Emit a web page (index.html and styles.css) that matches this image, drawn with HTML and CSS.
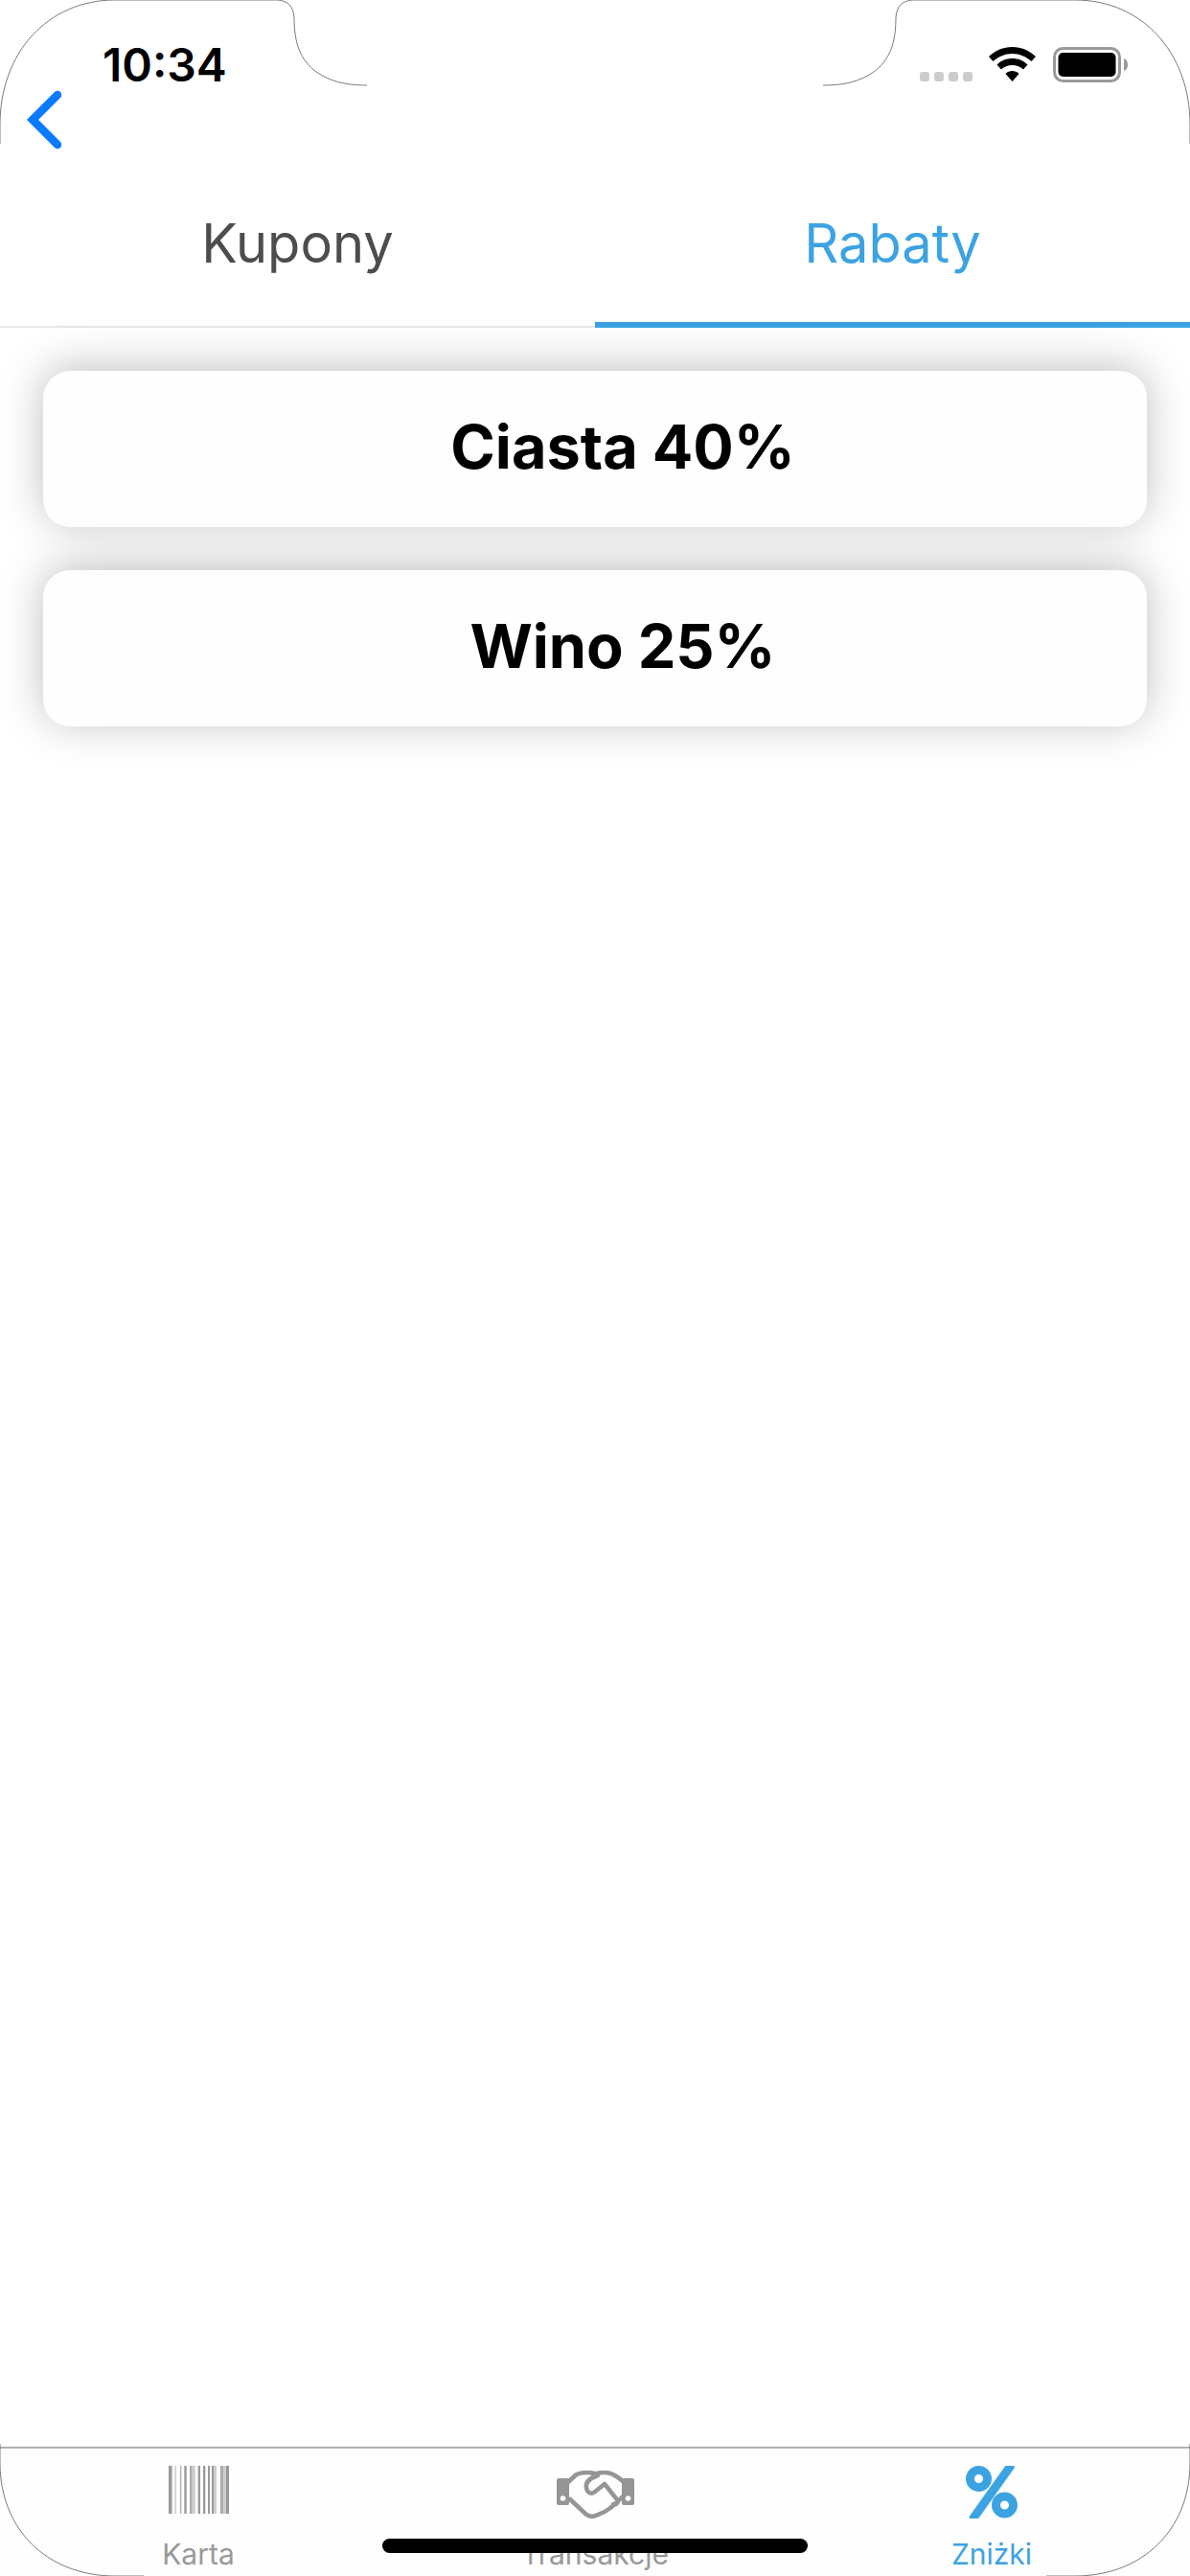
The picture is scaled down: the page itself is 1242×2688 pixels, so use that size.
FILE: index.html
```html
<!DOCTYPE html>
<html>
	<head>
		<meta charset="utf-8">
		<title>Rabaty</title>
		<link rel="stylesheet" href="styles.css">
	</head>
	<body>
		<div id="screen">
			<div class="status-bar">
				<span class="time">10:34</span>
				<div class="status-icons">
					<div class="signal"><i></i><i></i><i></i><i></i></div>
					<svg class="wifi" width="49" height="36" viewBox="0 0 49 36">
						<path d="M24.500 0C15 0 7 3.500 0 10L4.500 15C10 10 17 7 24.500 7S39 10 44.500 15L49 10C42 3.500 34 0 24.500 0Z"/>
						<path d="M24.500 12C18.500 12 13 14 8.500 18.500L13 23.500C16 20.500 20 19 24.500 19S33 20.500 36 23.500L40.500 18.500C36 14 30.500 12 24.500 12Z"/>
						<path d="M24.500 25C22 25 19.500 25.800 17.500 28L24.500 36L31.500 28C29.500 25.800 27 25 24.500 25Z"/>
					</svg>
					<svg class="battery" width="78" height="37" viewBox="0 0 78 37">
						<rect x="1.500" y="1.500" width="68" height="34" rx="9" fill="none" stroke="#999" stroke-width="3"/>
						<rect x="5.500" y="6" width="60" height="25" rx="5"/>
						<path d="M74 12C77 13 78 15.500 78 18.500S77 24 74 25Z" fill="#999"/>
					</svg>
				</div>
			</div>

			<div class="nav-bar">
				<svg class="back" width="38" height="64" viewBox="0 0 38 64">
					<path d="M34 5L8 31L34 57" fill="none" stroke="#0a7aff" stroke-width="8.500" stroke-linecap="round"/>
				</svg>
			</div>

			<div class="tabs">
				<div class="tab">Kupony</div>
				<div class="tab active">Rabaty</div>
			</div>

			<div class="list">
				<div class="card">Ciasta 40%</div>
				<div class="card">Wino 25%</div>
			</div>

			<div class="tab-bar">
				<div class="tab-item">
					<svg class="tab-icon" width="63" height="50" viewBox="0 0 63 50">
						<g fill="#999">
							<rect x="0" width="3" height="50"/>
							<rect x="16.300" width="2.400" height="50"/>
							<rect x="30.700" width="2.300" height="50"/>
							<rect x="36" width="2.300" height="50"/>
							<rect x="41" width="2" height="50"/>
							<rect x="45" width="2.300" height="50"/>
							<rect x="60" width="3" height="50"/>
						</g>
						<g fill="#adadad">
							<rect x="12" width="1.300" height="50"/>
							<rect x="22" width="2" height="50"/>
							<rect x="54" width="3.300" height="50"/>
						</g>
						<g fill="#ccc">
							<rect x="3" width="1.200" height="50"/>
							<rect x="6.500" width="1.500" height="50"/>
							<rect x="24" width="3.700" height="50"/>
							<rect x="47.300" width="2.700" height="50"/>
							<rect x="57.300" width="2.700" height="50"/>
						</g>
					</svg>
					<span>Karta</span>
				</div>
				<div class="tab-item">
					<svg class="tab-icon hands" width="81" height="50" viewBox="0 0 81 50">
						<rect y="8" width="13" height="28" rx="2" fill="#959595"/>
						<rect x="68" y="8" width="13" height="28" rx="2" fill="#959595"/>
						<circle cx="6.500" cy="29" r="2.800" fill="#fff"/>
						<circle cx="74.500" cy="29" r="2.800" fill="#fff"/>
						<g fill="none" stroke="#959595" stroke-width="4.500" stroke-linecap="round" stroke-linejoin="round">
							<path d="M12 12L20 4.500C24 2 30 1.800 36 2.200C39 2.500 41 3.500 43 5"/>
							<path d="M38 4.500C42 2 48 1.800 53 2.200C58 2.800 62 5 69 11"/>
							<path d="M41 6C35 8 30 12 31 18C32 24 37 25 40 22L50 14L62 29C65 33 63 36 59 35"/>
							<path d="M14 30L30 45C34 48.500 38 48.500 42 46.500L50 43L56 39L62 34L69 27"/>
						</g>
					</svg>
					<span>Transakcje</span>
				</div>
				<div class="tab-item active">
					<svg class="tab-icon percent" width="54" height="55" viewBox="0 0 54 55">
						<circle cx="13.500" cy="13.500" r="9" fill="none" stroke="#3ca3e2" stroke-width="9"/>
						<circle cx="40.500" cy="41" r="9" fill="none" stroke="#3ca3e2" stroke-width="9"/>
						<path d="M42 1.500H49.500L12.500 53.500H5Z" fill="#3ca3e2" stroke="#3ca3e2" stroke-width="3" stroke-linejoin="round"/>
					</svg>
					<span>Zniżki</span>
				</div>
			</div>

			<div class="home-indicator"></div>

			<svg class="outline" width="1242" height="2688" viewBox="0 0 1242 2688">
				<path d="M0 150V130C0 55 50 0 120 0H290C300 1 306 6 307 18C307 45 313 62 330 75C345 85 360 89 383 89"/>
				<path d="M859 89C882 89 897 85 912 75C929 62 935 45 935 18C936 6 942 1 952 0H1122C1192 0 1242 55 1242 130V150"/>
				<path d="M0 2550V2570C0 2640 50 2688 120 2688H150"/>
				<path d="M1242 2550V2570C1242 2640 1192 2688 1122 2688H1092"/>
			</svg>
		</div>
	</body>
</html>
```

FILE: styles.css
```css
* {
	margin: 0;
	padding: 0;
	box-sizing: border-box;
}

html, body {
	width: 1242px;
	height: 2688px;
	overflow: hidden;
	background: #fff;
}

body {
	font-family: Inter, "Liberation Sans", sans-serif;
}

#screen {
	position: relative;
	display: flex;
	flex-direction: column;
	width: 1242px;
	height: 2688px;
	overflow: hidden;
}

.status-bar {
	display: flex;
	justify-content: space-between;
	height: 94px;
	padding: 44px 65px 0 107px;
}

.time {
	font-size: 48px;
	line-height: 48px;
	font-weight: 600;
	color: #000;
}

.status-icons {
	display: flex;
	align-items: flex-start;
	gap: 17px;
	padding-top: 5px;
}

.signal {
	display: flex;
	gap: 5px;
	margin-top: 26px;
}

.signal i {
	width: 10px;
	height: 10px;
	border-radius: 3px;
	background: #ccc;
}

.battery {
	margin-left: 1px;
}

.nav-bar {
	height: 96px;
	padding-left: 26px;
}

.tabs {
	display: flex;
	height: 152px;
	border-bottom: 2px solid #e8e8e8;
}

.tab {
	flex: 1;
	display: flex;
	align-items: center;
	justify-content: center;
	height: 152px;
	padding-bottom: 24px;
	font-size: 56px;
	color: #4d4d4d;
}

.tab.active {
	color: #3ca3e2;
	border-bottom: 6px solid #3ca3e2;
	padding-bottom: 18px;
}

.list {
	flex: 1;
	display: flex;
	flex-direction: column;
	gap: 45px;
	padding: 45px;
}

.card {
	display: flex;
	align-items: center;
	justify-content: center;
	height: 163px;
	padding: 0 0 5px 58px;
	border-radius: 28px;
	background: #fefefe;
	box-shadow: 0 -4px 45px rgba(0, 0, 0, 0.25);
	font-size: 63px;
	font-weight: 700;
	color: #000;
}

.tab-bar {
	display: flex;
	height: 135px;
	border-top: 2px solid #b2b2b2;
	background: #fefefe;
}

.tab-item {
	flex: 1;
	display: flex;
	flex-direction: column;
	align-items: center;
	padding-top: 18px;
	font-size: 30px;
	line-height: 36px;
	color: #999;
}

.tab-item.active {
	color: #3ca3e2;
}

.tab-icon {
	display: block;
	margin-bottom: 24px;
}

.hands {
	margin-top: 5px;
	margin-bottom: 19px;
}

.percent {
	margin-bottom: 19px;
}

.home-indicator {
	position: absolute;
	left: 399px;
	top: 2649px;
	width: 444px;
	height: 15px;
	border-radius: 8px;
	background: #000;
}

.outline {
	position: absolute;
	top: 0;
	left: 0;
	pointer-events: none;
}

.outline path {
	fill: none;
	stroke: #222;
	stroke-width: 0.6;
}
```
